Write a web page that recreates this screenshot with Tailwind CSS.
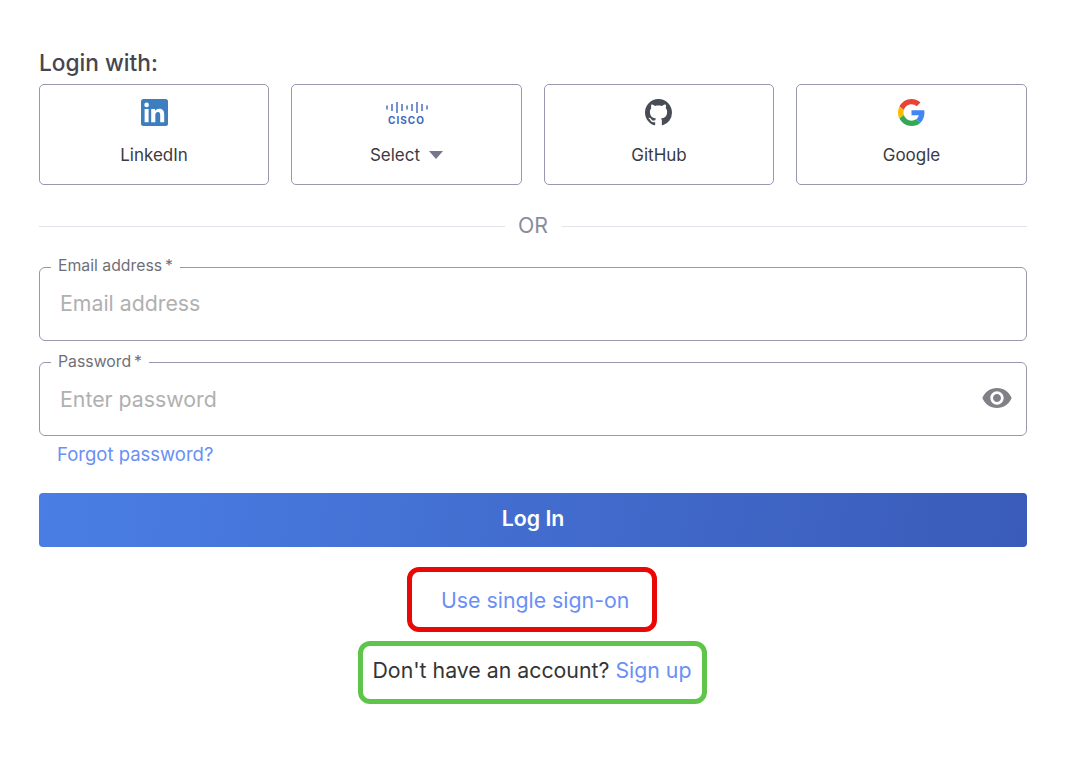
<!DOCTYPE html>
<html lang="en">
<head>
<meta charset="utf-8">
<title>Login</title>
<script src="https://cdn.jsdelivr.net/npm/@tailwindcss/browser@4"></script>
</head>
<body class="bg-white font-['Inter',sans-serif] text-[#333]">
<main class="w-[1073px] h-[762px] overflow-hidden pl-[39px] pr-[46px] pt-[49px]">
  <h1 class="text-[22.7px] leading-[28px] font-medium text-[#46464f] h-[35px]">Login with:</h1>
  <div class="grid grid-cols-[230px_231px_230px_231px] gap-[22px]">
    <button class="h-[101px] rounded-[5px] border border-[#9a96ae] flex flex-col items-center pt-[14px]">
      <svg class="w-[27px] h-[27px]" viewBox="0 0 27 27"><rect width="27" height="27" rx="2.5" fill="#3d7fbe"/><g fill="#fff"><rect x="3.6" y="10" width="4" height="13.2"/><circle cx="5.6" cy="5.9" r="2.3"/><path d="M10.2 10h3.8v1.9c.7-1.2 2.1-2.2 4.2-2.2 4 0 5 2.6 5 6v7.5h-4v-6.7c0-1.6-.1-3.5-2.2-3.5s-2.7 1.7-2.7 3.4v6.8h-4.1z"/></g></svg>
      <span class="text-[17px] leading-[22px] mt-[18px] text-[#3a3a42]">LinkedIn</span>
    </button>
    <button class="h-[101px] rounded-[5px] border border-[#9a96ae] flex flex-col items-center pt-[14px]">
      <span class="flex flex-col items-center h-[27px] w-[42px]">
        <svg class="w-[42px] h-[14px] mt-[2px]" viewBox="0 0 42 14" fill="none" stroke="#3d66bd" stroke-width="1.4"><path d="M1 4.500v4M6 3v7M11 1v11M16 3v7M21 4.500v4M26 3v7M31 1v11M36 3v7M41 4.500v4"/></svg>
        <span class="text-[10px] leading-[10px] font-bold tracking-[1px] text-[#3d66bd]">CISCO</span>
      </span>
      <span class="text-[17px] leading-[22px] mt-[18px] text-[#3a3a42] flex items-center gap-[9px]">Select
        <svg class="w-[14px] h-[8px]" viewBox="0 0 14 8"><path d="M0 0h14L7 8z" fill="#77748c"/></svg>
      </span>
    </button>
    <button class="h-[101px] rounded-[5px] border border-[#9a96ae] flex flex-col items-center pt-[14px]">
      <svg class="w-[27px] h-[27px] mr-[1px]" viewBox="0 0 16 16"><path fill="#474c55" d="M8 0C3.58 0 0 3.580 0 8c0 3.540 2.290 6.530 5.470 7.590.4.070.55-.17.55-.38 0-.19-.01-.82-.01-1.490-2.010.37-2.530-.49-2.690-.94-.09-.23-.48-.94-.82-1.130-.28-.15-.68-.52-.01-.53.63-.01 1.080.58 1.230.82.72 1.210 1.870.87 2.330.66.070-.52.28-.87.51-1.070-1.780-.2-3.640-.89-3.640-3.950 0-.87.31-1.590.82-2.150-.08-.2-.36-1.020.08-2.120 0 0 .67-.21 2.200.82.64-.18 1.320-.27 2-.27s1.360.09 2 .27c1.530-1.040 2.200-.82 2.200-.82.44 1.100.16 1.920.08 2.120.51.56.82 1.270.82 2.150 0 3.070-1.870 3.750-3.650 3.950.29.25.54.73.54 1.480 0 1.070-.01 1.930-.01 2.200 0 .21.15.46.55.38A8.010 8.010 0 0 0 16 8c0-4.420-3.580-8-8-8z"/></svg>
      <span class="text-[17px] leading-[22px] mt-[18px] text-[#3a3a42]">GitHub</span>
    </button>
    <button class="h-[101px] rounded-[5px] border border-[#9a96ae] flex flex-col items-center pt-[14px]">
      <svg class="w-[27px] h-[27px]" viewBox="0 0 48 48"><path fill="#EA4335" d="M24 9.500c3.540 0 6.710 1.220 9.210 3.600l6.850-6.850C35.900 2.380 30.470 0 24 0 14.620 0 6.510 5.380 2.560 13.220l7.980 6.190C12.430 13.720 17.740 9.500 24 9.500z"/><path fill="#4285F4" d="M46.980 24.550c0-1.570-.15-3.090-.38-4.550H24v9.020h12.940c-.58 2.960-2.260 5.480-4.780 7.180l7.730 6c4.510-4.180 7.090-10.360 7.090-17.650z"/><path fill="#FBBC05" d="M10.530 28.590c-.48-1.450-.76-2.990-.76-4.590s.27-3.140.76-4.590l-7.980-6.190C.92 16.460 0 20.120 0 24c0 3.880.92 7.540 2.560 10.780l7.970-6.190z"/><path fill="#34A853" d="M24 48c6.480 0 11.930-2.130 15.890-5.810l-7.730-6c-2.150 1.450-4.920 2.300-8.160 2.300-6.260 0-11.570-4.220-13.470-9.910l-7.980 6.190C6.510 42.620 14.620 48 24 48z"/></svg>
      <span class="text-[17px] leading-[22px] mt-[18px] text-[#3a3a42]">Google</span>
    </button>
  </div>

  <div class="flex items-center mt-[29px] h-[24px]">
    <span class="flex-1 h-px bg-[#e2e2e8]"></span>
    <span class="w-[57px] text-center text-[21.3px] leading-[22px] pb-[2px] text-[#8b8b9e]">OR</span>
    <span class="flex-1 h-px bg-[#e2e2e8]"></span>
  </div>

  <fieldset class="mt-[19px] h-[84px] rounded-[6px] border border-[#9a96ae]">
    <legend class="ml-[11px] px-[7px] text-[15.8px] leading-[20px] text-[#6f6f78]"><span class="relative -top-[1px]">Email address<span class="ml-[3px]">*</span></span></legend>
    <input type="email" placeholder="Email address" class="w-full h-[52px] pl-[20px] text-[21.3px] outline-none placeholder:text-[#b0b0b0]">
  </fieldset>

  <fieldset class="mt-[11px] h-[84px] rounded-[6px] border border-[#9a96ae] pr-[13px]">
    <legend class="ml-[11px] px-[7px] text-[15.8px] leading-[20px] text-[#6f6f78]">Password<span class="ml-[3px]">*</span></legend>
    <div class="flex items-center">
      <input type="password" placeholder="Enter password" class="flex-1 h-[52px] pl-[20px] pt-[2px] text-[21.3px] outline-none placeholder:text-[#b0b0b0]">
      <svg class="w-[32px] h-[32px]" viewBox="0 0 24 24"><path fill="#808086" d="M12 4.500C7 4.500 2.730 7.610 1 12c1.730 4.390 6 7.500 11 7.500s9.270-3.110 11-7.500c-1.730-4.390-6-7.500-11-7.500zM12 17c-2.760 0-5-2.240-5-5s2.240-5 5-5 5 2.240 5 5-2.240 5-5 5zm0-8c-1.660 0-3 1.340-3 3s1.340 3 3 3 3-1.340 3-3-1.340-3-3-3z"/></svg>
    </div>
  </fieldset>

  <a class="block ml-[18px] mt-[7px] text-[18.5px] leading-[22px] text-[#6a8ff5]">Forgot password?</a>

  <button class="mt-[28px] w-full h-[54px] rounded-[4px] bg-linear-[100deg] from-[#4a7ee4] to-[#3a5bb9] text-white text-[21.3px] font-semibold pb-[2px]">Log In</button>

  <div class="flex flex-col items-center mt-[20px] pr-[2px]">
    <div class="w-[250px] h-[65px] rounded-[12px] border-[5px] border-[#e80808] flex items-center pl-[29px] pt-[2px] text-[21.3px] text-[#6a8ff5]">Use single sign-on</div>
    <div class="mt-[9px] w-[349px] h-[63px] rounded-[12px] border-[5px] border-[#5fc54a] flex items-center justify-center pb-[3px] text-[21.3px] text-[#333338]">
      <span>Don't have an account? <a class="text-[#6a8ff5]">Sign up</a></span>
    </div>
  </div>
</main>
</body>
</html>
